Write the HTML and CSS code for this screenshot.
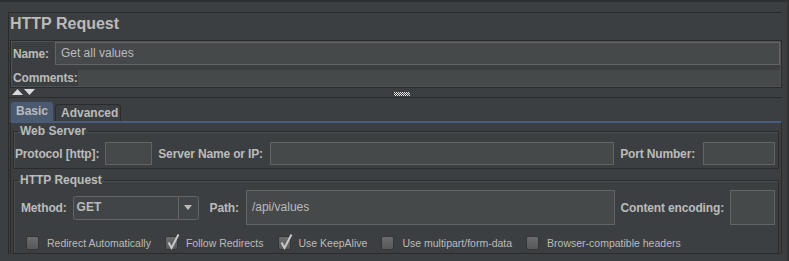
FILE: index.html
```html
<!DOCTYPE html>
<html lang="en">
<head>
  <meta charset="UTF-8" />
  <title>HTTP Request</title>
  <link rel="stylesheet" href="styles.css">
</head>
<body>
  <div class="window">
    <div class="frame">
      <h1 class="title">HTTP Request</h1>

      <div class="name-panel">
        <div class="name-row">
          <span class="label">Name:</span>
          <div class="field name-field">Get all values</div>
        </div>
        <div class="comments-row">
          <span class="label">Comments:</span>
          <div class="comments-area"></div>
        </div>
      </div>

      <div class="splitter">
        <svg class="arrows" width="23" height="6" viewBox="0 0 23 6">
          <polygon points="0,6 5.5,0 11,6" fill="#d8d8d8"/>
          <polygon points="12,0 23,0 17.5,6" fill="#d8d8d8"/>
        </svg>
        <svg class="grip" width="16" height="4" viewBox="0 0 16 4">
          <defs>
            <pattern id="dots" width="2" height="2" patternUnits="userSpaceOnUse">
              <rect x="0" y="0" width="1" height="1" fill="#e6e6e6"/>
              <rect x="1" y="1" width="1" height="1" fill="#e6e6e6"/>
            </pattern>
          </defs>
          <rect width="16" height="4" fill="url(#dots)"/>
        </svg>
      </div>

      <div class="tabs">
        <div class="tab active">Basic</div>
        <div class="tab">Advanced</div>
      </div>

      <div class="tab-panel">
        <fieldset class="group">
          <legend>Web Server</legend>
          <div class="row server-row">
            <span class="label">Protocol [http]:</span>
            <div class="field protocol-field"></div>
            <span class="label">Server Name or IP:</span>
            <div class="field server-field"></div>
            <span class="label">Port Number:</span>
            <div class="field port-field"></div>
          </div>
        </fieldset>

        <fieldset class="group">
          <legend>HTTP Request</legend>
          <div class="row request-row">
            <span class="label">Method:</span>
            <div class="combo">
              <span class="combo-value">GET</span>
              <span class="combo-button">
                <svg width="8" height="5" viewBox="0 0 8 5"><polygon points="0,0 8,0 4,5" fill="#bbbbbb"/></svg>
              </span>
            </div>
            <span class="label">Path:</span>
            <div class="field path-field">/api/values</div>
            <span class="label">Content encoding:</span>
            <div class="field encoding-field"></div>
          </div>
          <div class="checks">
            <div class="check"><span class="box"></span>Redirect Automatically</div>
            <div class="check"><span class="box checked"><svg viewBox="0 0 14 17" width="14" height="17"><path d="M2.5 9.5 L5.5 15 L12.5 1.5" fill="none" stroke="#c8c8c8" stroke-width="2"/></svg></span>Follow Redirects</div>
            <div class="check"><span class="box checked"><svg viewBox="0 0 14 17" width="14" height="17"><path d="M2.5 9.5 L5.5 15 L12.5 1.5" fill="none" stroke="#c8c8c8" stroke-width="2"/></svg></span>Use KeepAlive</div>
            <div class="check"><span class="box"></span>Use multipart/form-data</div>
            <div class="check"><span class="box"></span>Browser-compatible headers</div>
          </div>
        </fieldset>
      </div>
    </div>
  </div>
</body>
</html>
```

FILE: styles.css
```css
body {
  margin: 0;
  background: #3c3f41;
  font-family: "Liberation Sans", Arial, sans-serif;
  color: #bbbbbb;
  overflow: hidden;
}

.window {
  width: 787px;
  height: 259px;
  border-top: 2px solid #2e3032;
  border-right: 2px solid #313335;
  overflow: hidden;
}

.frame {
  margin: 10px 5px 0 8px;
  border-top: 1px solid #2b2b2b;
  border-left: 1px solid #2b2b2b;
  padding-left: 1px;
}

.title {
  margin: 1px 0 6px;
  font-size: 16px;
  line-height: 20px;
  font-weight: bold;
  color: #bbbbbb;
}

.label {
  font-size: 12px;
  font-weight: bold;
  line-height: 14px;
  letter-spacing: -0.15px;
  white-space: nowrap;
}

.field {
  box-sizing: border-box;
  height: 23px;
  background: #45494a;
  border: 1px solid #646464;
  font-size: 12px;
  line-height: 21px;
  padding: 0 5px;
  white-space: nowrap;
}

/* name + comments */
.name-panel {
  border: 1px solid #2b2b2b;
  box-shadow: inset 0 0 0 1px #505355;
  padding: 1px;
}

.name-row {
  display: flex;
  align-items: center;
  gap: 6px;
  padding-left: 1px;
}

.name-field {
  flex: 1;
}

.comments-row {
  display: flex;
  align-items: flex-end;
  margin-top: 5px;
  padding-left: 1px;
}

.comments-row .label {
  line-height: 16px;
}

.comments-area {
  flex: 1;
  height: 16px;
  background: #45494a;
}

.splitter {
  height: 9px;
  display: flex;
  align-items: flex-start;
  border-bottom: 1px solid #2b2b2b;
  margin-left: -1px;
}

.arrows {
  margin: 1px 0 0 3px;
}

.grip {
  margin: 4px 0 0 359px;
}

/* tabs */
.tabs {
  display: flex;
  align-items: flex-end;
  gap: 1px;
  height: 23px;
}

.tab {
  font-size: 12px;
  font-weight: bold;
  line-height: 14px;
  padding: 1px 5px 1px;
  border: 1px solid #2b2b2b;
  border-bottom: none;
  border-radius: 4px 4px 0 0;
  width: 54px;
}

.tab.active {
  width: 32px;
  padding: 2px 5px 3px;
  background: #4c5a70;
  border-color: #3a4455;
}

.tab-panel {
  border-top: 2px solid #4a5c7c;
  border-left: 1px solid #2b2b2b;
  border-right: 1px solid #2b2b2b;
  padding: 1px 2px 0;
}

.group {
  margin: 0;
  padding: 0 3px 3px 1px;
  border: 1px solid #2b2b2b;
  box-shadow: inset 1px 1px 0 #4a4d4f;
}

.group + .group {
  margin-top: 4px;
}

.group legend {
  margin-left: 3px;
  padding: 0 2px;
  font-size: 12px;
  font-weight: bold;
  line-height: 14px;
}

.row {
  display: flex;
  align-items: center;
  gap: 6px;
}

.server-row {
  padding-top: 4px;
}

.protocol-field {
  width: 47px;
}

.server-field {
  flex: 1;
  margin-left: 1px;
}

.port-field {
  width: 72px;
  margin-left: 2px;
}

.request-row {
  padding: 3px 0 0 6px;
}

.combo {
  box-sizing: border-box;
  width: 126px;
  height: 24px;
  display: flex;
  border: 1px solid #646464;
  border-radius: 3px;
  background: #414547;
  margin-right: 5px;
}

.combo-value {
  flex: 1;
  font-size: 12px;
  font-weight: bold;
  line-height: 20px;
  padding-left: 3px;
}

.combo-button {
  width: 19px;
  border-left: 1px solid #646464;
  display: flex;
  align-items: center;
  justify-content: center;
}

.path-field {
  flex: 1;
  height: 35px;
  line-height: 33px;
  margin-left: 1px;
}

.encoding-field {
  width: 45px;
  height: 35px;
}

/* checkboxes */
.checks {
  display: flex;
  gap: 14px;
  margin: 11px 0 0 11px;
}

.check {
  display: flex;
  align-items: center;
  gap: 8px;
  font-size: 10.5px;
  line-height: 14px;
  white-space: nowrap;
}

.box {
  position: relative;
  box-sizing: border-box;
  width: 13px;
  height: 14px;
  border: 1px solid #333537;
  border-radius: 2px;
  background: linear-gradient(#6a6c6e, #56585a);
}

.box svg {
  position: absolute;
  left: 0;
  top: -4px;
}
```
